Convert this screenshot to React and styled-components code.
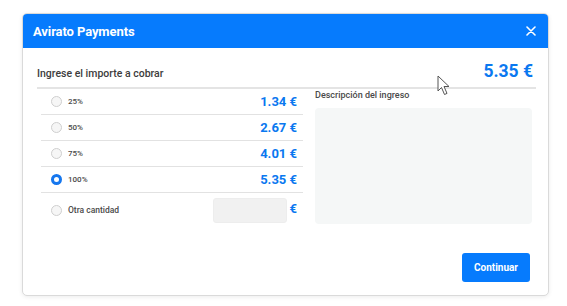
import React from "react";
import styled, { createGlobalStyle } from "styled-components";

const GlobalStyle = createGlobalStyle`
  html, body { margin: 0; padding: 0; background: #ffffff; }
  body { font-family: Roboto, "Liberation Sans", Arial, sans-serif; }
  * { box-sizing: border-box; }
`;

const Page = styled.div`
  position: relative;
  width: 567px;
  height: 306px;
  padding: 13px 0 0 22px;
`;

const Modal = styled.div`
  width: 527px;
  height: 283px;
  border: 1px solid #dadada;
  border-radius: 5px;
  box-shadow: 0 1px 4px rgba(0, 0, 0, 0.08);
  overflow: hidden;
  display: flex;
  flex-direction: column;
  background: #fff;
`;

const Header = styled.div`
  height: 34px;
  flex: none;
  background: #067bfd;
  display: flex;
  align-items: center;
  justify-content: space-between;
  padding: 0 12px 0 10px;
  color: #fff;
`;

const Title = styled.div`
  font-size: 13px;
  font-weight: 700;
  letter-spacing: -0.1px;
`;

const Close = styled.svg`
  width: 10px;
  height: 10px;
`;

const Body = styled.div`
  flex: 1;
  display: flex;
  flex-direction: column;
  padding: 0 12px 13px 14px;
`;

const TopRow = styled.div`
  height: 41px;
  display: flex;
  align-items: flex-end;
  justify-content: space-between;
  padding-bottom: 6px;
  border-bottom: 2px solid #e4e4e4;
`;

const Heading = styled.div`
  font-size: 10.5px;
  font-weight: 500;
  color: #3c3c3c;
  padding-bottom: 1px;
`;

const Total = styled.div`
  font-size: 17.5px;
  font-weight: 700;
  color: #0a78f0;
  margin-right: 3px;
`;

const Columns = styled.div`
  display: flex;
`;

const LeftCol = styled.div`
  width: 262px;
  margin-left: 4px;
`;

const RightCol = styled.div`
  width: 217px;
  margin-left: 12px;
`;

const Row = styled.label`
  height: ${(p) => (p.$tall ? "31px" : "26px")};
  display: flex;
  align-items: center;
  padding: 0 6px 0 10px;
  border-bottom: ${(p) => (p.$last ? "none" : "1px solid #e2e2e2")};
  padding-top: ${(p) => (p.$tall ? "3px" : "0")};
`;

const Radio = styled.span`
  width: 11px;
  height: 11px;
  border-radius: 50%;
  flex: none;
  border: ${(p) => (p.$checked ? "3px solid #1677ee" : "1px solid #cfcfcf")};
  background: ${(p) => (p.$checked ? "#fff" : "#f6f6f6")};
`;

const OptionLabel = styled.span`
  margin-left: 6px;
  font-size: ${(p) => (p.$big ? "8.5px" : "8px")};
  font-weight: 500;
  color: #4a4a4a;
`;

const Value = styled.span`
  margin-left: auto;
  font-size: 13px;
  font-weight: 700;
  color: #0a78f0;
`;

const AmountInput = styled.input`
  margin-left: auto;
  width: 74px;
  height: 25px;
  border: 1px solid #ededed;
  border-radius: 3px;
  background: #f1f1f1;
  outline: none;
`;

const Euro = styled.span`
  margin-left: 3px;
  margin-top: -3px;
  font-size: 13px;
  font-weight: 700;
  color: #0a78f0;
`;

const DescLabel = styled.div`
  font-size: 9px;
  font-weight: 500;
  color: #4a4a4a;
  height: 13px;
  line-height: 13px;
`;

const DescArea = styled.div`
  margin-top: 6px;
  height: 116px;
  border-radius: 4px;
  background: #f5f7f7;
`;

const Footer = styled.div`
  margin-top: auto;
  display: flex;
  justify-content: flex-end;
  padding-right: 6px;
`;

const Button = styled.button`
  width: 68px;
  height: 29px;
  border: none;
  border-radius: 3px;
  background: #067bfd;
  color: #fff;
  font-family: inherit;
  font-size: 10px;
  font-weight: 700;
`;

const Cursor = styled.svg`
  position: absolute;
  left: 437px;
  top: 75px;
  width: 16px;
  height: 22px;
`;

const options = [
  { label: "25%", value: "1.34 €" },
  { label: "50%", value: "2.67 €" },
  { label: "75%", value: "4.01 €" },
  { label: "100%", value: "5.35 €", checked: true },
];

export default function App() {
  return (
    <Page>
      <GlobalStyle />
      <Modal>
        <Header>
          <Title>Avirato Payments</Title>
          <Close viewBox="0 0 10 10">
            <path d="M1 1 L9 9 M9 1 L1 9" stroke="#fff" strokeWidth="1.6" strokeLinecap="round" />
          </Close>
        </Header>
        <Body>
          <TopRow>
            <Heading>Ingrese el importe a cobrar</Heading>
            <Total>5.35 €</Total>
          </TopRow>
          <Columns>
            <LeftCol>
              {options.map((o) => (
                <Row key={o.label}>
                  <Radio $checked={o.checked} />
                  <OptionLabel>{o.label}</OptionLabel>
                  <Value>{o.value}</Value>
                </Row>
              ))}
              <Row $tall $last>
                <Radio />
                <OptionLabel $big>Otra cantidad</OptionLabel>
                <AmountInput />
                <Euro>€</Euro>
              </Row>
            </LeftCol>
            <RightCol>
              <DescLabel>Descripción del ingreso</DescLabel>
              <DescArea />
            </RightCol>
          </Columns>
          <Footer>
            <Button>Continuar</Button>
          </Footer>
        </Body>
      </Modal>
      <Cursor viewBox="0 0 16 22">
        <path
          d="M1 1 L1 16 L4.5 12.5 L7.5 19.5 L10 18.4 L7 11.5 L12 11.5 Z"
          fill="#fff"
          stroke="#555"
          strokeWidth="1"
          strokeLinejoin="round"
        />
      </Cursor>
    </Page>
  );
}
